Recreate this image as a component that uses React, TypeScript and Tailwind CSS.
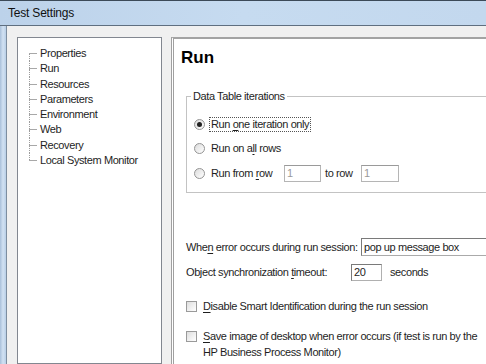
import React from "react";

const treeItems = [
  "Properties",
  "Run",
  "Resources",
  "Parameters",
  "Environment",
  "Web",
  "Recovery",
  "Local System Monitor",
];

function Radio({ checked }: { checked?: boolean }) {
  return (
    <span className="flex h-[11px] w-[11px] shrink-0 items-center justify-center rounded-full border border-[#949494] bg-linear-to-br from-[#dcdcdc] to-white">
      {checked && <span className="h-[5px] w-[5px] rounded-full bg-[#222]" />}
    </span>
  );
}

function Check() {
  return <span className="block h-[11px] w-[11px] shrink-0 border border-[#9a9a9a] bg-linear-to-br from-[#dedede] to-white" />;
}

function U({ children }: { children: React.ReactNode }) {
  return <span className="underline decoration-1 underline-offset-[2px]">{children}</span>;
}

function TreeRow({ label, first, last }: { label: string; first: boolean; last: boolean }) {
  return (
    <div className="flex h-[15.25px] items-stretch pl-[11px]">
      <div className="flex w-[8px] flex-col">
        <div className={first ? "flex-1" : "flex-1 border-l border-dotted border-[#9c9c9c]"} />
        <div className="h-[1px] bg-[#a8a8a8]" />
        <div className={last ? "flex-1" : "flex-1 border-l border-dotted border-[#9c9c9c]"} />
      </div>
      <span className="ml-[3px] self-center leading-[15px]">{label}</span>
    </div>
  );
}

export default function App() {
  return (
    <div className="flex h-[364px] w-[486px] flex-col overflow-hidden bg-[#f0f0f0] font-['Liberation_Sans',Arial,sans-serif] text-[11px] tracking-[-0.4px] whitespace-nowrap text-[#1e1e1e]">
      {/* title bar */}
      <div className="flex h-[26px] shrink-0 items-center border-t border-b border-t-[#3c4a58] border-b-[#5f6f80] bg-linear-to-r from-[#bcd2ea] via-[#c6dbf0] to-[#c3d8ee] pl-[8px]">
        <span className="text-[12px] tracking-[-0.2px] text-[#101010]">Test Settings</span>
      </div>

      <div className="flex min-h-0 flex-1">
        {/* window frame */}
        <div className="w-[7px] shrink-0 border-r border-[#7d8ea0] bg-linear-to-r from-[#a9c0da] via-[#d2e2f3] to-[#b9cfe7]" />

        {/* client */}
        <div className="flex flex-1 gap-[9px] bg-[#f0f0f0] pt-[11px] pl-[10px]">
          {/* tree */}
          <div className="w-[145px] shrink-0 border border-[#828790] bg-white pt-[8px]">
            {treeItems.map((t, i) => (
              <TreeRow key={t} label={t} first={i === 0} last={i === treeItems.length - 1} />
            ))}
          </div>

          {/* page */}
          <div className="min-w-0 flex-1 overflow-hidden border-t-2 border-l-[3px] border-double border-t-[#a3a3a3] border-l-[#a0a0a0] bg-white pl-[7px]">
            <div className="mt-[9px] h-[20px] text-[17px] leading-[20px] font-bold tracking-normal text-black">Run</div>

            <div className="pl-[5px]">
              {/* group box */}
              <div className="mt-[28px] w-[330px] border border-[#c3c3c3] pb-[10px] pl-[7px]">
                <div className="-mt-[8px] ml-[-3px] w-fit bg-white px-[2px] leading-[14px]">Data Table iterations</div>

                <div className="mt-[12px] flex h-[18px] items-center">
                  <Radio checked />
                  <span className="ml-[4px] border border-dotted border-[#555] px-[1px] leading-[13px]">
                    Run <U>o</U>ne iteration only
                  </span>
                </div>

                <div className="mt-[6px] flex h-[18px] items-center">
                  <Radio />
                  <span className="ml-[6px]">
                    Run on a<U>l</U>l rows
                  </span>
                </div>

                <div className="mt-[7px] flex h-[18px] items-center">
                  <Radio />
                  <span className="ml-[6px] w-[73px]">
                    Run from <U>r</U>ow
                  </span>
                  <span className="flex h-[17px] w-[37px] items-center border border-[#b5b5b5] border-t-[#9a9a9a] pl-[2px] text-[#9a9a9a]">1</span>
                  <span className="ml-[4px] w-[36px]">to row</span>
                  <span className="flex h-[17px] w-[38px] items-center border border-[#b5b5b5] border-t-[#9a9a9a] pl-[2px] text-[#9a9a9a]">1</span>
                </div>
              </div>

              <div className="mt-[45px] flex h-[18px] items-center">
                <span className="w-[175px] shrink-0">
                  Whe<U>n</U> error occurs during run session:
                </span>
                <span className="flex h-[18px] w-[140px] shrink-0 items-center border border-[#aaaaaa] border-t-[#7a7a7a] border-l-[#7a7a7a] pl-[2px]">
                  pop up message box
                </span>
              </div>

              <div className="mt-[8px] flex h-[17px] items-center">
                <span className="w-[165px] shrink-0">
                  Object synchronization <U>t</U>imeout:
                </span>
                <span className="flex h-[17px] w-[31px] items-center border border-[#b0b0b0] border-t-[#7a7a7a] border-l-[#7a7a7a] pl-[2px]">20</span>
                <span className="ml-[8px]">seconds</span>
              </div>

              <div className="mt-[18px] flex h-[14px] items-center">
                <Check />
                <span className="ml-[6px]">
                  <U>D</U>isable Smart Identification during the run session
                </span>
              </div>

              <div className="mt-[15px] flex items-start">
                <div className="mt-[3px]">
                  <Check />
                </div>
                <span className="ml-[6px] leading-[16px]">
                  <U>S</U>ave image of desktop when error occurs (if test is run by the
                  <br />
                  HP Business Process Monitor)
                </span>
              </div>
            </div>
          </div>
        </div>
      </div>
    </div>
  );
}
